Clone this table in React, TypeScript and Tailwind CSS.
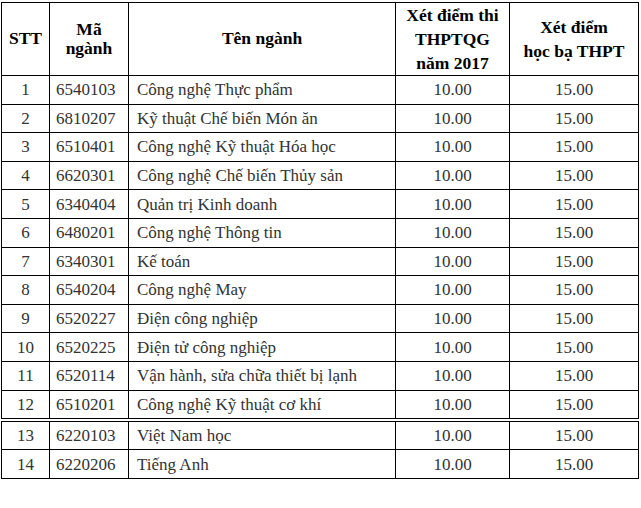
import React from "react";

const rows1: [string, string, string][] = [
  ["1", "6540103", "Công nghệ Thực phẩm"],
  ["2", "6810207", "Kỹ thuật Chế biến Món ăn"],
  ["3", "6510401", "Công nghệ Kỹ thuật Hóa học"],
  ["4", "6620301", "Công nghệ Chế biến Thủy sản"],
  ["5", "6340404", "Quản trị Kinh doanh"],
  ["6", "6480201", "Công nghệ Thông tin"],
  ["7", "6340301", "Kế toán"],
  ["8", "6540204", "Công nghệ May"],
  ["9", "6520227", "Điện công nghiệp"],
  ["10", "6520225", "Điện tử công nghiệp"],
  ["11", "6520114", "Vận hành, sửa chữa thiết bị lạnh"],
  ["12", "6510201", "Công nghệ Kỹ thuật cơ khí"],
];

const rows2: [string, string, string][] = [
  ["13", "6220103", "Việt Nam học"],
  ["14", "6220206", "Tiếng Anh"],
];

function Cols() {
  return (
    <colgroup>
      <col className="w-[48px]" />
      <col className="w-[79px]" />
      <col className="w-[267px]" />
      <col className="w-[114px]" />
      <col className="w-[129px]" />
    </colgroup>
  );
}

function Row({ r, h }: { r: [string, string, string]; h: string }) {
  return (
    <tr className={h}>
      <td className="border border-black text-center p-0">{r[0]}</td>
      <td className="border border-black pl-[6px] p-0">{r[1]}</td>
      <td className="border border-black pl-[8px] p-0">{r[2]}</td>
      <td className="border border-black text-center p-0">10.00</td>
      <td className="border border-black text-center p-0">15.00</td>
    </tr>
  );
}

export default function App() {
  return (
    <div
      className="w-[641px] h-[508px] bg-white pt-[2px] pl-[1px]"
      style={{ fontFamily: '"Liberation Serif", "Times New Roman", serif' }}
    >
      <table className="table-fixed border-collapse w-[637px] text-[17px] text-[#333] leading-none">
        <Cols />
        <thead>
          <tr className="h-[73px] text-black font-bold text-[17.5px]">
            <th className="border border-black p-0">STT</th>
            <th className="border border-black p-0 leading-[19px]">
              Mã
              <br />
              ngành
            </th>
            <th className="border border-black p-0">Tên ngành</th>
            <th className="border border-black p-0 leading-[24px]">
              Xét điểm thi
              <br />
              THPTQG
              <br />
              năm 2017
            </th>
            <th className="border border-black p-0 leading-[24px]">
              Xét điểm
              <br />
              học bạ THPT
            </th>
          </tr>
        </thead>
        <tbody>
          {rows1.map((r) => (
            <Row key={r[0]} r={r} h="h-[28.6px]" />
          ))}
        </tbody>
      </table>
      <table className="table-fixed border-collapse w-[637px] mt-[2px] text-[17px] text-[#333] leading-none">
        <Cols />
        <tbody>
          {rows2.map((r) => (
            <Row key={r[0]} r={r} h="h-[28.3px]" />
          ))}
        </tbody>
      </table>
    </div>
  );
}
